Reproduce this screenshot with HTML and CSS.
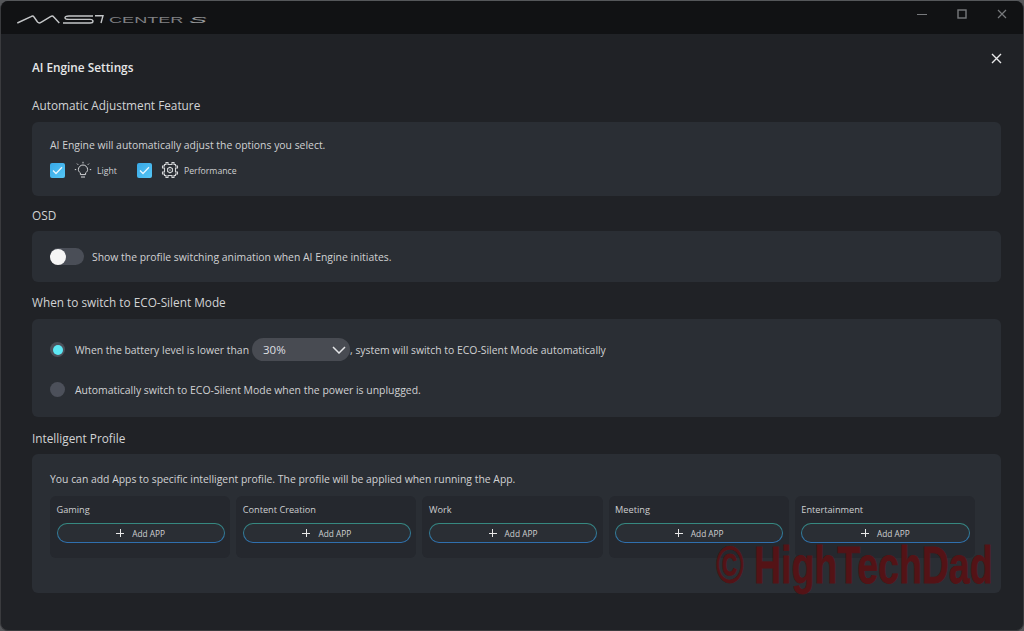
FILE: index.html
```html
<!DOCTYPE html>
<html lang="en">
<head>
<meta charset="utf-8">
<title>MSI Center S - AI Engine Settings</title>
<link rel="stylesheet" href="styles.css">
</head>
<body>
<div class="window">
  <header class="titlebar">
    <div class="brand">
      <svg class="logo" width="88" height="14" viewBox="0 0 88 14" fill="none" stroke="#c4c6c8" stroke-width="1.4">
        <path d="M.3 12 L14 5.6 Q16 4.4 17 6 L20.5 11 Q22 12.6 24 11.4 L33.5 5.6 Q35.6 4.4 36.8 6 L42.3 12"/>
        <path d="M76 5 H52 Q48 5 48 6.8 Q48 8.4 52 8.4 H73 Q76 8.4 76 10.2 Q76 12 73 12 H46"/>
        <path d="M78 4.7 H86 L84 12"/>
      </svg>
      <span class="logo-center">CENTER</span>
      <span class="logo-s">S</span>
    </div>
    <div class="winctl">
      <svg width="10" height="10" viewBox="0 0 10 10" stroke="#77797c" fill="none" stroke-width="1.2"><path d="M0 5.5H10"/></svg>
      <svg width="10" height="10" viewBox="0 0 10 10" stroke="#77797c" fill="none" stroke-width="1.4"><rect x="1" y="1" width="8" height="8"/></svg>
      <svg width="10" height="10" viewBox="0 0 10 10" stroke="#77797c" fill="none" stroke-width="1.2"><path d="M1 1L9 9M9 1L1 9"/></svg>
    </div>
  </header>

  <main class="content">
    <div class="page-head">
      <h1 class="page-title">AI Engine Settings</h1>
      <svg class="close" width="11" height="11" viewBox="0 0 11 11" stroke="#e8e9ea" fill="none" stroke-width="1.4"><path d="M1 1L10 10M10 1L1 10"/></svg>
    </div>

    <h2 class="heading h-auto">Automatic Adjustment Feature</h2>
    <section class="card card-auto">
      <p class="text">AI Engine will automatically adjust the options you select.</p>
      <div class="opts">
        <span class="check"><svg width="11" height="9" viewBox="0 0 11 9" fill="none" stroke="#e6f6ff" stroke-width="1.3"><path d="M1 4.5L4 7.5L10 1.2"/></svg></span>
        <svg class="opt-icon" width="18" height="18" viewBox="0 0 18 18" fill="none" stroke="#d4d6d8" stroke-width="1">
          <path d="M6.4 13.6V11.9C5.2 11.1 4.4 9.9 4.4 8.6A4.6 4.6 0 0 1 13.6 8.6C13.6 9.9 12.8 11.1 11.6 11.9V13.6Z"/>
          <path d="M7 16H11M9 .8V2.4M3 2.6L4.2 3.8M15 2.6L13.8 3.8M.8 8.6H2.2M15.8 8.6H17.2"/>
        </svg>
        <span class="opt-label opt-light">Light</span>
        <span class="check"><svg width="11" height="9" viewBox="0 0 11 9" fill="none" stroke="#e6f6ff" stroke-width="1.3"><path d="M1 4.5L4 7.5L10 1.2"/></svg></span>
        <svg class="opt-icon" width="18" height="18" viewBox="0 0 18 18" fill="none" stroke="#d4d6d8" stroke-width="1.1">
          <path d="M5 1.5H7V3.5H11V1.5H13V3.5H14.5V5H16.5V7H14.5V11H16.5V13H14.5V14.5H13V16.5H11V14.5H7V16.5H5V14.5H3.5V13H1.5V11H3.5V7H1.5V5H3.5V3.5H5Z"/>
          <path d="M9 6.2L11.4 7.6V10.4L9 11.8L6.6 10.4V7.6Z"/>
          <circle cx="9" cy="9" r=".7" fill="#d4d6d8" stroke="none"/>
        </svg>
        <span class="opt-label">Performance</span>
      </div>
    </section>

    <h2 class="heading h-osd">OSD</h2>
    <section class="card card-osd">
      <span class="toggle"><span class="knob"></span></span>
      <span class="text">Show the profile switching animation when AI Engine initiates.</span>
    </section>

    <h2 class="heading h-eco">When to switch to ECO-Silent Mode</h2>
    <section class="card card-eco">
      <div class="eco-row">
        <span class="radio radio-on"></span>
        <span class="text">When the battery level is lower than</span>
        <span class="select"><span>30%</span>
          <svg width="14" height="8" viewBox="0 0 14 8" fill="none" stroke="#e4e5e7" stroke-width="1.5"><path d="M1 1L7 7L13 1"/></svg>
        </span>
        <span class="text">, system will switch to ECO-Silent Mode automatically</span>
      </div>
      <div class="eco-row eco-second">
        <span class="radio"></span>
        <span class="text text-wide">Automatically switch to ECO-Silent Mode when the power is unplugged.</span>
      </div>
    </section>

    <h2 class="heading h-prof">Intelligent Profile</h2>
    <section class="card card-prof">
      <p class="text">You can add Apps to specific intelligent profile. The profile will be applied when running the App.</p>
      <div class="profiles">
        <div class="profile"><div class="profile-name">Gaming</div><div class="add"><span class="add-in"><i class="plus"></i>Add APP</span></div></div>
        <div class="profile"><div class="profile-name">Content Creation</div><div class="add"><span class="add-in"><i class="plus"></i>Add APP</span></div></div>
        <div class="profile"><div class="profile-name">Work</div><div class="add"><span class="add-in"><i class="plus"></i>Add APP</span></div></div>
        <div class="profile"><div class="profile-name">Meeting</div><div class="add"><span class="add-in"><i class="plus"></i>Add APP</span></div></div>
        <div class="profile"><div class="profile-name">Entertainment</div><div class="add"><span class="add-in"><i class="plus"></i>Add APP</span></div></div>
      </div>
    </section>
  </main>
  <div class="watermark">© HighTechDad</div>
</div>
</body>
</html>
```
FILE: styles.css
```css
* { box-sizing: border-box; }
html, body { margin: 0; height: 631px; overflow: hidden; background: #55575a; }
body { font-family: "Open Sans", "Noto Sans", sans-serif; color: #d6d7d9; }
.window {
  position: relative;
  width: 1024px; height: 630px;
  margin-top: 1px;
  background: #202226;
  border-radius: 8px;
  border: 1px solid #3a3b3e;
  border-top: none;
  overflow: hidden;
}
.titlebar {
  height: 33px;
  background: #111214;
  display: flex; align-items: center; justify-content: space-between;
  padding: 0 16px 0 16px;
}
.brand { display: flex; align-items: center; }
.logo { display: block; }
.logo-center, .logo-s {
  font-family: "Liberation Sans", sans-serif;
  font-size: 8.3px; line-height: 8px;
  color: #808184;
  margin-top: 5px;
  transform-origin: left center;
}
.logo-center { width: 80px; margin-left: 4px; transform: scaleX(2.18); }
.logo-s { font-style: italic; transform: scaleX(3.2); color: #9a9b9d; }
.winctl { display: flex; gap: 30px; align-items: center; margin-top: -7px; }
.content { padding: 0 22px 0 31px; }
.page-head { display: flex; justify-content: space-between; align-items: center; padding-top: 18px; height: 47px; }
.page-title { margin: 0; font-size: 11.8px; line-height: 20px; font-weight: 600; color: #e6e7e8; }
.close { align-self: flex-start; margin-top: 1px; margin-right: -1px; }
.heading { margin: 0; font-size: 11.8px; font-weight: 400; line-height: 18px; color: #d2d3d5; }
.h-auto { margin-top: 15px; }
.h-osd { margin-top: 10px; }
.h-eco { margin-top: 11px; }
.h-prof { margin-top: 12px; }
.card { background: #2a2e34; border-radius: 6px; width: 969px; }
.text { margin: 0; font-size: 10.4px; line-height: 16px; color: #d0d1d3; white-space: nowrap; }
.text-wide { font-size: 10.45px; }
.card-auto { margin-top: 8px; height: 74px; padding: 15px 18px 0; }
.opts { display: flex; align-items: center; margin-top: 8px; height: 18px; }
.check {
  width: 15px; height: 15px; border-radius: 2px;
  background: linear-gradient(135deg, #38a8e6, #55c6f5);
  display: flex; align-items: center; justify-content: center;
}
.opt-icon { margin-left: 9px; }
.opt-label { font-size: 8.7px; color: #cfd0d2; margin-left: 5px; margin-top: 1px; }
.opt-light { width: 40px; }
.card-osd { margin-top: 7px; height: 51px; padding: 0 18px; display: flex; align-items: center; gap: 8px; }
.toggle { width: 34px; height: 17px; border-radius: 9px; background: #4a4e57; display: block; }
.knob { display: block; width: 16px; height: 16px; margin-top: .5px; border-radius: 50%; background: #f5f5f5; }
.card-eco { margin-top: 8px; height: 98px; padding: 19px 18px 0; }
.eco-row { display: flex; align-items: center; height: 23px; }
.eco-second { margin-top: 17px; }
.radio { width: 15px; height: 15px; border-radius: 50%; background: #4c505a; margin-right: 10px; flex: none; position: relative; }
.radio-on::after {
  content: ""; position: absolute; left: 2.5px; top: 2.5px;
  width: 10px; height: 10px; border-radius: 50%; background: #5de8f4;
}
.select {
  width: 98px; height: 23px; border-radius: 12px; background: #484b52;
  display: flex; align-items: center; justify-content: space-between;
  padding: 0 4px 0 11px; margin-left: 3px;
  font-size: 11.5px; color: #dedfe1;
}
.card-prof { margin-top: 7px; height: 139px; padding: 17px 18px 0; }
.profiles { display: flex; gap: 6px; margin-top: 9px; width: 925px; }
.profile { flex: 1; height: 62px; background: #25282e; border-radius: 6px; padding: 6px 5.5px 0 6.5px; }
.profile-name { font-size: 9.2px; line-height: 15px; color: #cdced0; }
.add {
  margin-top: 6px; height: 20px; border-radius: 10px; padding: 1px;
  background: linear-gradient(180deg, #36897f, #2f6fb0);
}
.add-in {
  display: flex; height: 18px; border-radius: 9px; background: #2a2e34;
  align-items: center; justify-content: center;
  font-size: 8.3px; color: #cfd0d2;
}
.plus { position: relative; display: block; width: 8px; height: 8px; margin-right: 8px; }
.plus::before { content: ""; position: absolute; left: 0; top: 3.5px; width: 8px; height: 1px; background: #e8e8e8; }
.plus::after { content: ""; position: absolute; left: 3.5px; top: 0; width: 1px; height: 8px; background: #e8e8e8; }
.watermark {
  position: absolute; left: 715px; top: 534px;
  font-family: "Liberation Sans", sans-serif;
  font-weight: bold; font-size: 52px; line-height: 60px; color: #541316;
  -webkit-text-stroke: .8px #541316;
  white-space: nowrap;
  transform: scaleX(.72);
  transform-origin: left center;
}
```
